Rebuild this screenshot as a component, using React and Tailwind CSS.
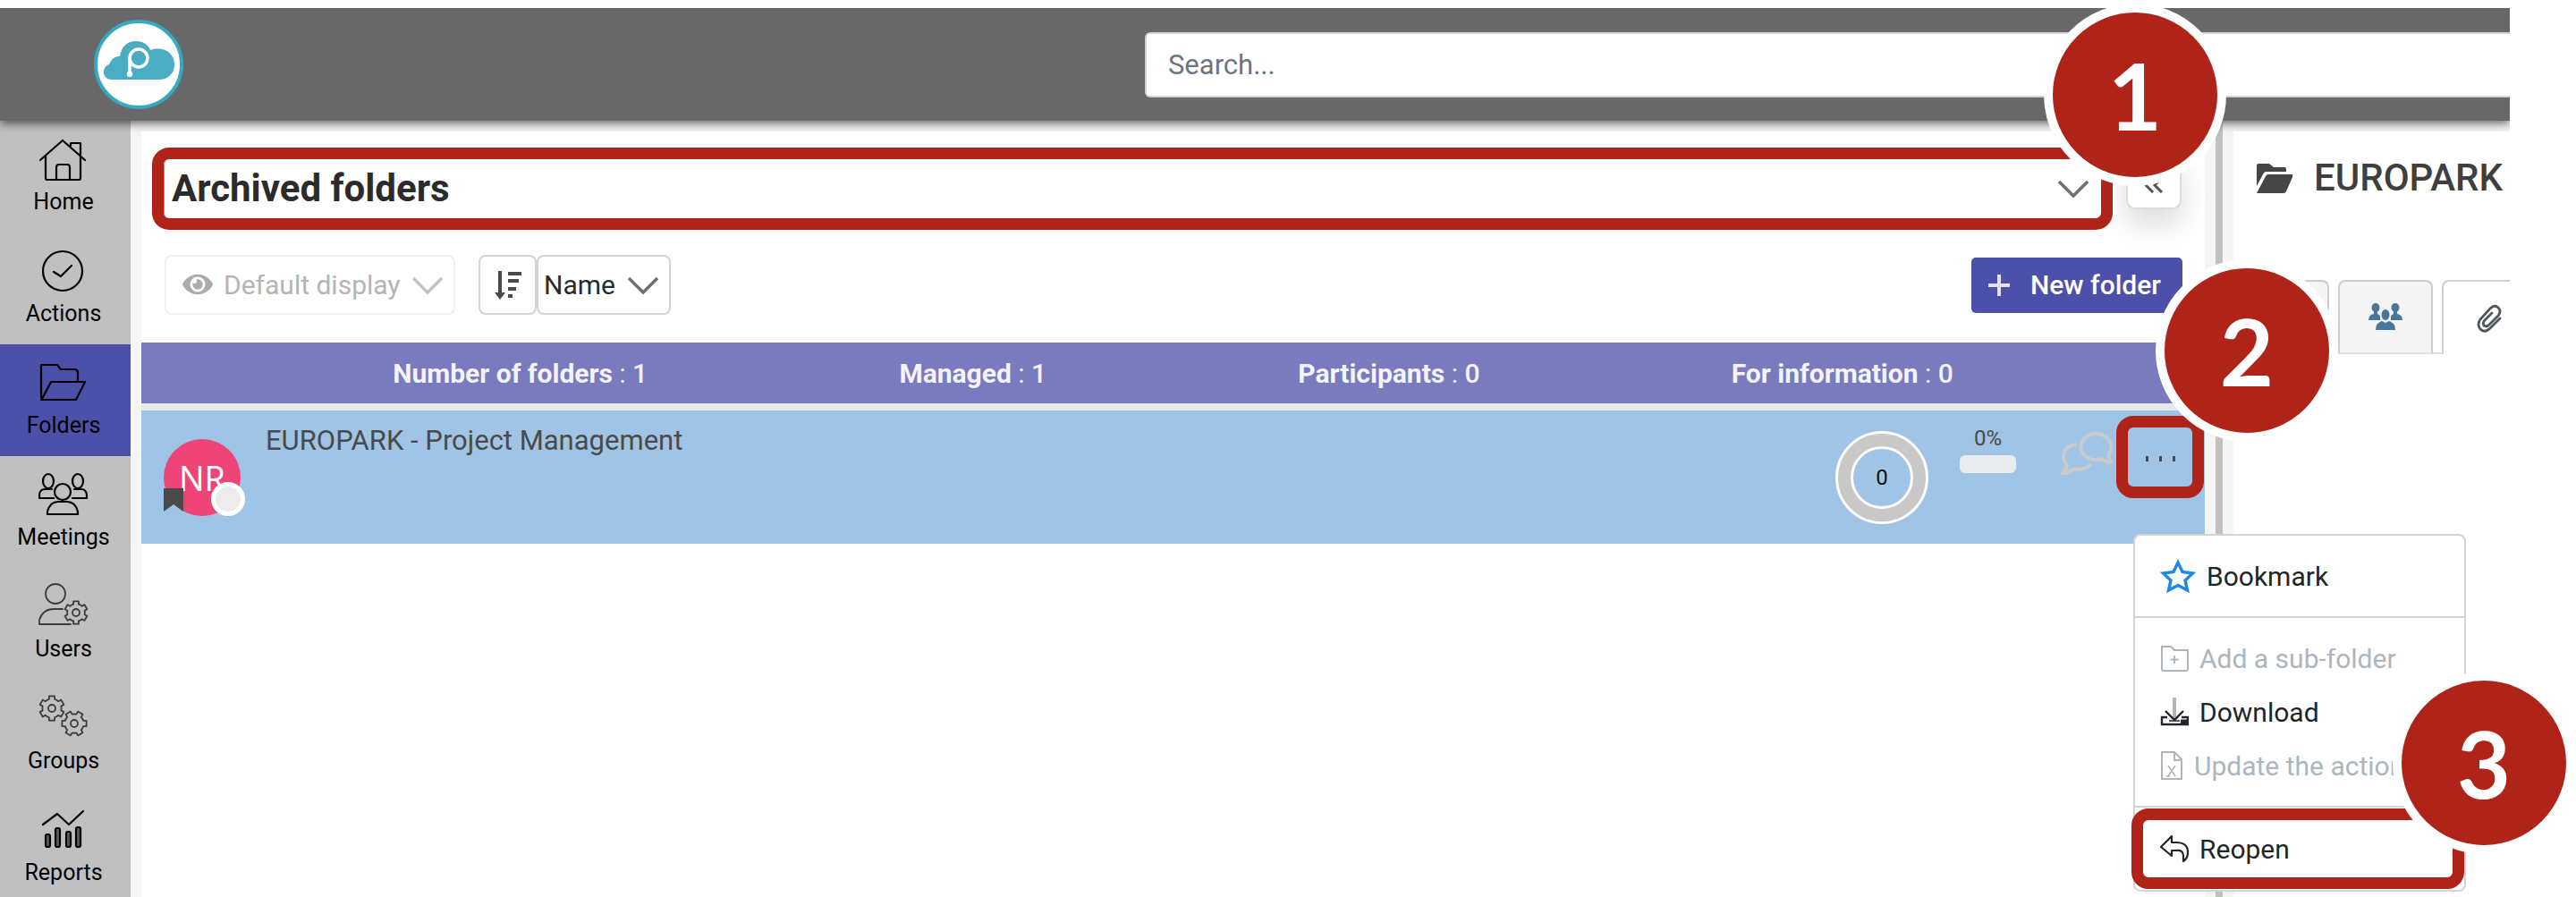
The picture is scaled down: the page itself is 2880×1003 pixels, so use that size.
import React, { useState } from "react";
import { FaEye } from "react-icons/fa";

const gearPath = (cx, cy, r, turn = 0) => {
  const points = [];
  for (let i = 0; i < 6; i++) {
    const base = turn + i * 60 - 90;
    [[-30, 0.76], [-17, 0.76], [-13, 1], [13, 1], [17, 0.76]].forEach(([angle, k]) => {
      const a = ((base + angle) * Math.PI) / 180;
      points.push(`${(cx + r * k * Math.cos(a)).toFixed(1)} ${(cy + r * k * Math.sin(a)).toFixed(1)}`);
    });
  }
  return `M${points.join("L")}Z`;
};

const NavIcon = ({ children, soft }) => (
  <svg viewBox="0 0 56 56" className={`w-14 h-14 ${soft ? "text-[#3c3c3c]" : "text-black"}`} fill="none" stroke="currentColor" strokeWidth={soft ? 1.8 : 2.2} strokeLinecap="round" strokeLinejoin="round" aria-hidden="true">
    {children}
  </svg>
);

const navItems = [
  {
    label: "Home",
    icon: (
      <NavIcon>
        <path d="M2 29L27 7L52 29M8 24V49Q8 51 10 51H45Q47 51 47 49V24M36 13V10H47V22M20 51V37Q20 34 23 34H32Q35 34 35 37V51" />
      </NavIcon>
    ),
  },
  {
    label: "Actions",
    icon: (
      <NavIcon>
        <circle cx="27" cy="28" r="22" />
        <path d="M17 29L25 34L37 22" />
      </NavIcon>
    ),
  },
  {
    label: "Folders",
    active: true,
    icon: (
      <NavIcon>
        <path d="M4 46Q3 45 3 43V8H21L25 13H40Q44 13 44 17V27M3 47H42L52 27H14L4 46" />
      </NavIcon>
    ),
  },
  {
    label: "Meetings",
    icon: (
      <NavIcon>
        <circle cx="27" cy="25" r="9" />
        <path d="M10 50V47Q13 36 22 36H32Q41 36 44 47V50Z" />
        <ellipse cx="11" cy="13" rx="6" ry="8" />
        <ellipse cx="44" cy="13" rx="6" ry="8" />
        <path d="M17 32H1V28Q2 22 7 22H15M38 32H54V28Q53 22 48 22H40" />
      </NavIcon>
    ),
  },
  {
    label: "Users",
    icon: (
      <NavIcon soft>
        <circle cx="19" cy="14" r="11" />
        <path d="M36 48H1V43Q5 31 17 31H27" />
        <path d={gearPath(42, 35, 13)} />
        <circle cx="42" cy="35" r="4" />
      </NavIcon>
    ),
  },
  {
    label: "Groups",
    icon: (
      <NavIcon soft>
        <path d={gearPath(15, 17, 14)} />
        <circle cx="15" cy="17" r="4" />
        <path d={gearPath(40, 34, 14, 30)} />
        <circle cx="40" cy="34" r="4" />
      </NavIcon>
    ),
  },
  {
    label: "Reports",
    icon: (
      <NavIcon>
        <path d="M5 22L21 10L34 22L50 7" />
        <g fill="#5a5a5a">
          <rect x="8" y="33" width="5" height="14" rx="2" />
          <rect x="19" y="26" width="5" height="21" rx="2" />
          <rect x="31" y="30" width="5" height="17" rx="2" />
          <rect x="42" y="25" width="5" height="22" rx="2" />
        </g>
      </NavIcon>
    ),
  },
];

const stats = [
  { label: "Number of folders", value: 1 },
  { label: "Managed", value: 1 },
  { label: "Participants", value: 0 },
  { label: "For information", value: 0 },
];

const Logo = () => (
  <svg viewBox="0 0 100 100" className="w-[100px] h-[100px]" aria-label="Home page">
    <circle cx="50" cy="50" r="48" fill="#fff" stroke="#36a9c1" strokeWidth="4" />
    <path d="M20 67C9 67 8 53 17 50C20 43 24 41 29 41C31 29 38 24 47 24C55 24 61 28 63 34C78 29 90 37 90 50C90 60 83 67 73 67Z" fill="#4badc4" />
    <circle cx="50" cy="43" r="10" fill="none" stroke="#fff" strokeWidth="3.5" />
    <path d="M40 43V61" stroke="#fff" strokeWidth="3.5" />
    <circle cx="40" cy="61" r="3.2" fill="#fff" />
  </svg>
);

const Chevron = ({ className }) => (
  <svg viewBox="0 0 34 20" className={`pointer-events-none absolute ${className}`} fill="none" stroke="currentColor" strokeWidth="3.5" aria-hidden="true">
    <path d="M1 2L17 18L33 2" />
  </svg>
);

const Step = ({ number, className }) => (
  <div className={`absolute z-30 flex h-[204px] w-[204px] items-center justify-center rounded-full border-[10px] border-white bg-[#af2318] font-[Lato,sans-serif] text-[104px] leading-none font-bold text-white ${className}`}>
    {number}
  </div>
);

const MenuItem = ({ icon, label, disabled }) => (
  <button type="button" role="menuitem" disabled={disabled} className="flex h-[60px] w-full items-center gap-3 pl-7 whitespace-nowrap text-[#212529] disabled:text-[#adb5bd]">
    {icon}
    {label}
  </button>
);

const FolderMenu = () => (
  <div role="menu" className="absolute top-[132px] left-[19px] w-[372px] rounded-lg border-2 border-[#d4d4d4] bg-white text-[30px]">
    <div className="flex h-[92px] items-center border-b-2 border-[#d4d4d4]">
      <MenuItem
        label="Bookmark"
        icon={
          <svg viewBox="0 0 40 38" className="h-[38px] w-10" fill="none" stroke="#1e88e5" strokeWidth="3.4">
            <path d="M20 4L25 14.5L36.5 16L28 24L30.5 35L20 29.5L9.5 35L12 24L3.5 16L15 14.5Z" />
          </svg>
        }
      />
    </div>
    <div className="border-b-2 border-[#d4d4d4] py-[15px]">
      <MenuItem
        disabled
        label="Add a sub-folder"
        icon={
          <svg viewBox="0 0 32 32" className="h-8 w-8" fill="none" stroke="currentColor" strokeWidth="2">
            <path d="M2 28V3H12L16 7H31V28Q31 30 29 30H4Q2 30 2 28ZM16 13V22M11.5 17.5H20.5" />
          </svg>
        }
      />
      <MenuItem
        label="Download"
        icon={
          <svg viewBox="0 0 32 32" className="h-8 w-8" fill="none" stroke="currentColor" strokeWidth="2.4">
            <path d="M16 0V25" stroke="#b5b5b5" strokeWidth="4" />
            <path d="M6 15L16 25L26 15M8 22H2V30H31V22H24" />
            <path d="M10 26H22" strokeWidth="1.5" />
            <path d="M23 27H30" strokeWidth="5" />
          </svg>
        }
      />
      <MenuItem
        disabled
        label="Update the actions"
        icon={
          <svg viewBox="0 0 26 32" className="h-8 w-[26px]" fill="none" stroke="currentColor" strokeWidth="2">
            <path d="M2 1H16L24 9V31H2ZM16 1V10H24" />
            <path d="M9 16L17 28M17 16L9 28M7 28H11" strokeWidth="1.5" />
          </svg>
        }
      />
    </div>
    <div className="relative flex h-[92px] items-center">
      <MenuItem
        label="Reopen"
        icon={
          <svg viewBox="0 0 32 32" className="h-8 w-8" fill="none" stroke="currentColor" strokeWidth="2.2" strokeLinejoin="round">
            <path d="M13 2V9H18Q31 9 31 20Q31 27 26 30V24Q26 17 18 18H13V24L1 14Z" />
          </svg>
        }
      />
      <div className="pointer-events-none absolute inset-y-px right-0 -left-1 rounded-[19px] border-[13px] border-[#af2318]" />
    </div>
    <Step number={3} className="top-[152px] left-[288px]" />
  </div>
);

const FolderRow = () => (
  <div className="flex h-[149px] items-start bg-[#a0c4e5] pr-px pl-[25px]">
    <div className="relative mt-8 flex h-[86px] w-[86px] items-center justify-center rounded-full bg-[#ef4478] font-['Open_Sans',sans-serif] text-[38px] text-white">
      NR
      <svg viewBox="0 0 22 26" className="absolute bottom-[5px] left-0 w-[22px]" fill="#4a4a4a" aria-hidden="true">
        <path d="M0 0H22V26L11 18L0 26Z" />
      </svg>
      <span className="absolute -right-[5px] bottom-0 h-[38px] w-[38px] rounded-full border-[5px] border-white bg-[#ececec]" />
    </div>
    <a href="#europark" className="mt-[14px] ml-7 text-[31px] leading-10 text-[#4a4a4a]">EUROPARK - Project Management</a>
    <svg viewBox="0 0 104 104" className="mt-[23px] ml-auto w-[104px]" aria-label="0 actions">
      <circle cx="52" cy="52" r="42" fill="none" stroke="#fff" strokeWidth="20" />
      <circle cx="52" cy="52" r="42" fill="none" stroke="#c8c8c8" strokeWidth="14" />
      <text x="52" y="60" textAnchor="middle" fontSize="24" fontFamily="Roboto, sans-serif" fill="#111">0</text>
    </svg>
    <div className="mt-4 ml-[35px] w-[63px] text-center text-[24px] leading-[30px] text-[#4a4a4a]">
      0%
      <div className="mt-1 h-5 rounded-md bg-[#e9ecef]" />
    </div>
    <svg viewBox="0 0 59 48" className="mt-6 ml-[50px] w-[59px]" fill="none" stroke="#c9cacb" strokeWidth="4" strokeLinejoin="round" aria-label="Comments">
      <path d="M46 30A17 14.500 0 1 1 54 24Q53 30 56 34Q50 34 46 30Z" />
      <path d="M18 14Q3 16 3 28Q3 33 7 37Q6 42 2 46Q9 46 13 42Q28 43 34 36" />
    </svg>
    <div className="relative mt-[6px] ml-[3px]">
      <button type="button" aria-label="Folder menu" aria-haspopup="menu" className="flex h-[92px] w-[98px] items-center justify-center gap-3 rounded-[19px] border-[13px] border-[#af2318] pt-1">
        <span className="h-[6px] w-[3px] bg-[#4a4a4a]" />
        <span className="h-[6px] w-[3px] bg-[#4a4a4a]" />
        <span className="h-[6px] w-[3px] bg-[#4a4a4a]" />
      </button>
      <FolderMenu />
      <Step number={2} className="-top-[175px] left-11" />
    </div>
  </div>
);

const FoldersPanel = () => {
  const [folderType, setFolderType] = useState("archived");
  const [sort, setSort] = useState("name");

  return (
    <section className="relative z-30 flex-1 bg-white">
      <div className="flex items-start gap-[15px] pt-[18px] pr-[26px] pl-3">
        <div className="relative z-10 flex-1">
          <div className="relative rounded-[19px] border-[13px] border-[#af2318] bg-white">
            <select aria-label="Folder type" value={folderType} onChange={(e) => setFolderType(e.target.value)} className="block h-[66px] w-full appearance-none rounded-md border-l border-[#999] pl-2 text-[42px] leading-[60px] font-bold text-[#2b2b2b]">
              <option value="archived">Archived folders</option>
            </select>
            <Chevron className="top-[23px] right-[14px] w-[34px] text-[#707070]" />
          </div>
          <Step number={1} className="-top-[161px] -right-[127px]" />
        </div>
        <button type="button" aria-label="Collapse" className="mt-[7px] flex h-[62px] w-[62px] items-center justify-center rounded-[10px] border-2 border-[#dcdcdc] bg-white pt-2 shadow-[0_16px_32px_rgba(0,0,0,0.15)]">
          <svg viewBox="0 0 22 18" className="w-[22px]" fill="none" stroke="#555" strokeWidth="3">
            <path d="M10 1L2 9L10 17M20 1L12 9L20 17" />
          </svg>
        </button>
      </div>

      <div className="mt-7 flex items-center pr-[25px] pl-[26px]">
        <div className="relative">
          <FaEye className="absolute top-4 left-5 h-[34px] w-[34px] text-[#acacac]" />
          <select aria-label="Display" disabled className="h-[67px] w-[325px] appearance-none rounded-lg border-2 border-[#efefef] pl-[64px] text-[30px] text-[#b4b4b4] opacity-100">
            <option>Default display</option>
          </select>
          <Chevron className="top-6 right-[14px] w-[34px] text-[#c3c3c3]" />
        </div>
        <button type="button" aria-label="Sort order" className="ml-[26px] flex h-[67px] w-[65px] items-center justify-center rounded-lg border-2 border-[#d4d4d4]">
          <svg viewBox="0 0 30 32" className="w-[30px]" stroke="#4a4a4a" strokeWidth="4" fill="none">
            <path d="M6 0V26M15 3H30M15 11H27M15 20H24M15 28H20" />
            <path d="M0 24H12L6 32Z" fill="#4a4a4a" stroke="none" />
          </svg>
        </button>
        <div className="relative">
          <select aria-label="Sort by" value={sort} onChange={(e) => setSort(e.target.value)} className="h-[67px] w-[150px] appearance-none rounded-lg border-2 border-[#d4d4d4] pl-[6px] text-[30px] text-[#2b2b2b]">
            <option value="name">Name</option>
          </select>
          <Chevron className="top-6 right-[14px] w-[34px] text-[#707070]" />
        </div>
        <button type="button" className="ml-auto flex h-[62px] w-[236px] items-center gap-[22px] rounded-[5px] bg-[#4c50a9] pl-[18px] text-[30px] font-medium whitespace-nowrap text-white">
          <svg viewBox="0 0 26 26" className="w-[26px] shrink-0" stroke="#e3e3f3" strokeWidth="4">
            <path d="M13 1V25M1 13H25" />
          </svg>
          New folder
        </button>
      </div>

      <div className="mt-[31px] flex h-[76px] items-center justify-evenly border-b-8 border-[#e8e8e8] bg-[#797bbe] text-[30px] text-[#f3f3fb]">
        {stats.map((stat) => (
          <span key={stat.label}>
            <b>{stat.label}</b> : <b className="font-medium">{stat.value}</b>
          </span>
        ))}
      </div>
      <FolderRow />
    </section>
  );
};

const PeopleIcon = () => (
  <svg viewBox="0 0 38 31" className="w-[38px]" fill="#4a769b" aria-hidden="true">
    <ellipse cx="8" cy="5" rx="4.5" ry="5" />
    <ellipse cx="30" cy="5" rx="4.5" ry="5" />
    <ellipse cx="19" cy="13" rx="4.5" ry="6" />
    <path d="M0 19Q0 13 6 12V9H10V12L13 14V19ZM38 19Q38 13 32 12V9H28V12L25 14V19ZM8 30Q8 22 15 20L19 22L23 20Q30 22 30 30Z" />
  </svg>
);

const PaperclipIcon = () => (
  <svg viewBox="0 0 28 32" className="w-7" fill="none" stroke="#4f565c" strokeWidth="2.8" strokeLinecap="round" aria-hidden="true">
    <path d="M26 16L15 27Q9 33 4 28Q0 23 4 17L15 5Q20 0 24 4Q28 8 24 13L14 23Q11 26 8 24Q6 21 9 18L17 10" />
  </svg>
);

const DetailPanel = () => (
  <section className="relative z-20 w-[309px] shrink-0 overflow-hidden bg-white">
    <h2 className="flex items-center gap-[24px] pt-[27px] pl-[26px] text-[42px] leading-[50px] font-medium whitespace-nowrap text-[#3f3f3f]">
      <svg viewBox="0 0 40 33" className="w-10 shrink-0" fill="#454545" aria-hidden="true">
        <path d="M0 25V2Q0 0 2 0H14L19 4H31Q33 4 33 6V9H11Q8 9 7 12Z" />
        <path d="M10 14Q11 12 13 12H39Q41 12 40 15L33 31Q32 33 30 33H0Z" />
      </svg>
      EUROPARK
    </h2>
    <div className="mt-[89px] flex w-max pl-px" role="tablist">
      <button type="button" role="tab" aria-label="Details" className="h-[83px] w-[106px] rounded-t-lg border-2 border-[#cdcdcd] border-b-[#dee2e6] bg-[#f4f4f4]" />
      <span className="w-[10px] border-b-2 border-[#dee2e6]" />
      <button type="button" role="tab" aria-label="Participants" className="flex h-[83px] w-[106px] items-center justify-center rounded-t-lg border-2 border-[#cdcdcd] border-b-[#dee2e6] bg-[#f4f4f4]">
        <PeopleIcon />
      </button>
      <span className="w-[10px] border-b-2 border-[#dee2e6]" />
      <button type="button" role="tab" aria-selected="true" aria-label="Attachments" className="flex h-[83px] w-[106px] items-center justify-center rounded-t-lg border-2 border-b-0 border-[#cdd2d6]">
        <PaperclipIcon />
      </button>
    </div>
  </section>
);

const App = () => {
  return (
    <div className="flex h-screen flex-col overflow-hidden bg-white pt-[9px] pr-[74px] font-[Roboto,sans-serif]">
      <header className="relative z-10 flex h-[126px] shrink-0 items-center justify-between bg-[#686868] pl-[105px] shadow-[0_3px_10px_rgba(0,0,0,0.6)] [clip-path:inset(0_0_-20px_0)]">
        <Logo />
        <input type="search" aria-label="Search" placeholder="Search..." className="h-[73px] w-[56.5%] rounded-l-md border-2 border-r-0 border-[#ced4da] bg-white pl-6 text-[31px] placeholder:text-[#6c757d]" />
      </header>

      <div className="flex min-h-0 flex-1 bg-[#f5f5f5]">
        <nav className="w-[146px] shrink-0 bg-[#c0c0c0]">
          {navItems.map((item) => (
            <a key={item.label} href={`#${item.label.toLowerCase()}`} className={`flex h-[125px] flex-col items-center gap-[6px] pt-[15px] pr-1 text-[25px] leading-7 text-black ${item.active ? "bg-[#4c50a9]" : ""}`}>
              {item.icon}
              {item.label}
            </a>
          ))}
        </nav>
        <main className="flex flex-1 pl-3">
          <div className="flex flex-1 pt-3">
            <FoldersPanel />
          </div>
          <div className="w-8 border-x-[12px] border-[#f5f5f5] bg-[#c0c0c0]" />
          <div className="flex pt-3">
            <DetailPanel />
          </div>
        </main>
      </div>
    </div>
  );
};

export default App;
